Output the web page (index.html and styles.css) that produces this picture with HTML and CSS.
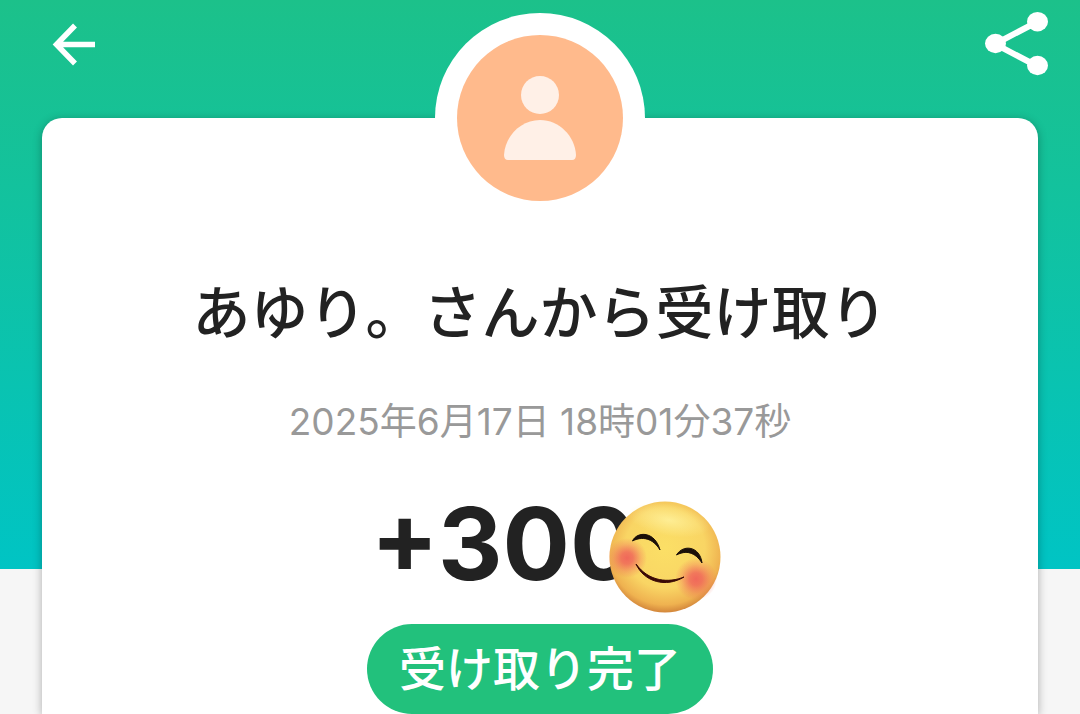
FILE: index.html
```html
<!DOCTYPE html>
<html lang="ja">
<head>
  <meta charset="UTF-8" />
  <meta name="viewport" content="width=device-width, initial-scale=1" />
  <title>受け取り完了</title>
  <link rel="stylesheet" href="styles.css">
</head>
<body>
  <header class="top-bar">
    <button class="icon-button" type="button" aria-label="戻る">
      <svg width="44" height="44" viewBox="0 0 44 44" fill="none" stroke="#fff" stroke-width="5.500">
        <path d="M43 22.500H5M23 3.500L4.500 22.500L23 41.500" />
      </svg>
    </button>
    <button class="icon-button" type="button" aria-label="共有">
      <svg width="64" height="64" viewBox="0 0 64 64" fill="#fff">
        <path d="M53 10L11 32L53 54" fill="none" stroke="#fff" stroke-width="6" />
        <ellipse cx="53.500" cy="9.700" rx="10.500" ry="9.700" />
        <ellipse cx="11.500" cy="31.500" rx="10.500" ry="9.700" />
        <ellipse cx="53.500" cy="53.500" rx="10.500" ry="9.700" />
      </svg>
    </button>
  </header>

  <main class="card">
    <div class="avatar">
      <svg width="166" height="166" viewBox="0 0 166 166">
        <circle cx="83" cy="83" r="83" fill="#ffba8c" />
        <circle cx="83" cy="60" r="19" fill="#fff0e7" />
        <path d="M51 125Q47 125 47 120C48 101 64 85 83 85S118 101 119 120Q119 125 115 125Z" fill="#fff0e7" />
      </svg>
    </div>

    <h1 class="title">あゆり。さんから受け取り</h1>
    <p class="date">2025年6月17日 18時01分37秒</p>

    <div class="amount">
      <span>+300</span>
      <svg class="emoji" width="112" height="114" viewBox="0 0 112 114">
        <defs>
          <radialGradient id="face" cx="50%" cy="42%" r="60%">
            <stop offset="0" stop-color="#fbdf66" />
            <stop offset="0.600" stop-color="#f9d564" />
            <stop offset="0.850" stop-color="#efb250" />
            <stop offset="1" stop-color="#cb7a35" />
          </radialGradient>
          <radialGradient id="cheek">
            <stop offset="0" stop-color="#f0685a" />
            <stop offset="0.300" stop-color="#f0685a" stop-opacity="0.850" />
            <stop offset="0.700" stop-color="#f0685a" stop-opacity="0.300" />
            <stop offset="1" stop-color="#f0685a" stop-opacity="0" />
          </radialGradient>
          <radialGradient id="shine">
            <stop offset="0" stop-color="#fff3a0" stop-opacity="0.800" />
            <stop offset="1" stop-color="#fff3a0" stop-opacity="0" />
          </radialGradient>
        </defs>
        <circle cx="56" cy="57" r="55.500" fill="url(#face)" />
        <ellipse cx="60" cy="20" rx="42" ry="16" fill="url(#shine)" transform="rotate(10 60 20)" />
        <circle cx="18" cy="58" r="20" fill="url(#cheek)" />
        <circle cx="87" cy="79" r="21" fill="url(#cheek)" />
        <g fill="#1b0f08" stroke="#1b0f08" stroke-width="1" stroke-linejoin="round">
          <path d="M23.500 41C28 31 46 31 51 50C44 38 33 36 23.500 41Z" />
          <path d="M67.500 55C74 44 91 46 93 63C86 52 77 50 67.500 55Z" />
          <path d="M27 64C35 82 57 88 75 77C60 83 40 82 27 64Z" fill="#3a0905" stroke="#3a0905" />
        </g>
      </svg>
    </div>

    <span class="status">受け取り完了</span>
  </main>
</body>
</html>
```

FILE: styles.css
```css
* {
  box-sizing: border-box;
}

body {
  margin: 0;
  min-height: 100vh;
  display: flex;
  flex-direction: column;
  font-family: Inter, "Noto Sans CJK JP", sans-serif;
  color: #222;
  background: #f6f6f6 linear-gradient(#1cc18a, #00c4c4) no-repeat;
  background-size: 100% 569px;
}

.top-bar {
  height: 118px;
  padding: 12px 32px 0 52px;
  display: flex;
  justify-content: space-between;
  align-items: flex-start;
}

.icon-button {
  height: 64px;
  padding: 0;
  border: none;
  background: none;
  display: flex;
  align-items: center;
  cursor: pointer;
}

.card {
  flex: 1;
  margin: 0 42px;
  background-color: #fff;
  border-radius: 20px 20px 0 0;
  box-shadow: 0 2px 10px rgba(0, 0, 0, 0.3);
  display: flex;
  flex-direction: column;
  align-items: center;
}

.avatar {
  width: 210px;
  height: 210px;
  margin-top: -105px;
  border-radius: 50%;
  background-color: #fff;
  display: flex;
  justify-content: center;
  align-items: center;
}

.title {
  margin: 50px 0 0;
  font-size: 58px;
  font-weight: 500;
  line-height: 80px;
}

.date {
  margin: 39px 0 0;
  font-size: 37px;
  font-weight: 400;
  line-height: 60px;
  color: #999;
}

.amount {
  position: relative;
  margin-top: 32px;
  padding-right: 72px;
  font-size: 100px;
  font-weight: 700;
  line-height: 120px;
}

.emoji {
  position: absolute;
  top: 16px;
  right: -12px;
}

.status {
  margin-top: 20px;
  padding: 0 32px;
  border-radius: 45px;
  background-color: #22c17c;
  color: #fff;
  font-size: 47px;
  font-weight: 500;
  line-height: 90px;
}
```
